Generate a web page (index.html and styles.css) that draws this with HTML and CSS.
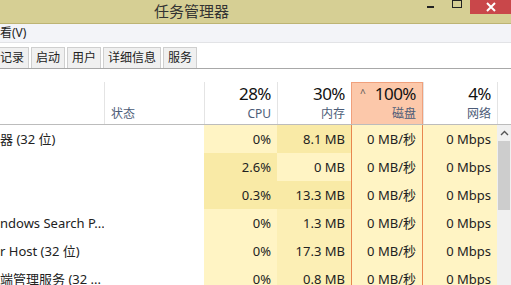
FILE: index.html
```html
<!DOCTYPE html>
<html lang="zh-CN">
<head>
  <meta charset="UTF-8">
  <meta name="viewport" content="width=device-width, initial-scale=1.0">
  <title>任务管理器</title>
  <link rel="stylesheet" href="styles.css">
</head>
<body>
  <div id="window">
    <div class="titlebar">
      <span class="title">任务管理器</span>
      <div class="controls">
        <span class="btn-min"></span>
        <span class="btn-max"></span>
        <span class="btn-close">
          <svg width="12" height="12" viewBox="0 0 12 12"><path d="M2 2 L10 10 M10 2 L2 10" stroke="#fff" stroke-width="2"/></svg>
        </span>
      </div>
    </div>

    <div class="menubar">看(V)</div>

    <div class="tabs">
      <span class="tab first">记录</span>
      <span class="tab">启动</span>
      <span class="tab">用户</span>
      <span class="tab">详细信息</span>
      <span class="tab">服务</span>
    </div>

    <div class="header">
      <div class="hcell name"></div>
      <div class="hcell status"><span class="label">状态</span></div>
      <div class="hcell num"><span class="pct">28%</span><span class="label">CPU</span></div>
      <div class="hcell num"><span class="pct">30%</span><span class="label">内存</span></div>
      <div class="hcell num disk">
        <span class="arrow">^</span>
        <span class="pct">100%</span><span class="label">磁盘</span>
      </div>
      <div class="hcell num"><span class="pct">4%</span><span class="label">网络</span></div>
      <div class="hcell scroll-head"></div>
    </div>

    <div class="list">
      <div class="rows">
        <div class="row">
          <div class="cell name">器 (32 位)</div>
          <div class="cell status"></div>
          <div class="cell num">0%</div>
          <div class="cell num dark">8.1 MB</div>
          <div class="cell num disk">0 MB/秒</div>
          <div class="cell num">0 Mbps</div>
        </div>
        <div class="row">
          <div class="cell name"></div>
          <div class="cell status"></div>
          <div class="cell num dark">2.6%</div>
          <div class="cell num">0 MB</div>
          <div class="cell num disk">0 MB/秒</div>
          <div class="cell num">0 Mbps</div>
        </div>
        <div class="row">
          <div class="cell name"></div>
          <div class="cell status"></div>
          <div class="cell num dark">0.3%</div>
          <div class="cell num dark">13.3 MB</div>
          <div class="cell num disk">0 MB/秒</div>
          <div class="cell num">0 Mbps</div>
        </div>
        <div class="row">
          <div class="cell name">ndows Search P...</div>
          <div class="cell status"></div>
          <div class="cell num">0%</div>
          <div class="cell num mid">1.3 MB</div>
          <div class="cell num disk">0 MB/秒</div>
          <div class="cell num">0 Mbps</div>
        </div>
        <div class="row">
          <div class="cell name">r Host (32 位)</div>
          <div class="cell status"></div>
          <div class="cell num">0%</div>
          <div class="cell num mid">17.3 MB</div>
          <div class="cell num disk">0 MB/秒</div>
          <div class="cell num">0 Mbps</div>
        </div>
        <div class="row">
          <div class="cell name">端管理服务 (32 ...</div>
          <div class="cell status"></div>
          <div class="cell num">0%</div>
          <div class="cell num mid">0.8 MB</div>
          <div class="cell num disk">0 MB/秒</div>
          <div class="cell num">0 Mbps</div>
        </div>
      </div>
      <div class="scrollbar">
        <div class="scroll-up">
          <svg width="9" height="6" viewBox="0 0 9 6"><path d="M1 5 L4.5 1.5 L8 5" fill="none" stroke="#555" stroke-width="1.4"/></svg>
        </div>
        <div class="thumb"></div>
      </div>
    </div>
  </div>
</body>
</html>
```

FILE: styles.css
```css
body{
  margin: 0;
  overflow: hidden;
  background: #fff;
  font-family: "Noto Sans", "Noto Sans CJK SC", sans-serif;
  color: #222;
}
#window{
  width: 511px;
  height: 285px;
  overflow: hidden;
}

/* title bar */
.titlebar{
  height: 23px;
  background: #d6cf94;
  border-bottom: 1px solid #bdb474;
  display: flex;
  align-items: flex-start;
}
.title{
  margin-left: 154px;
  margin-top: 1px;
  font-size: 15px;
  line-height: 20px;
  color: #333;
  font-family: "Noto Sans CJK SC", sans-serif;
}
.controls{
  margin-left: auto;
  display: flex;
  align-items: flex-start;
}
.btn-min{
  width: 7px;
  height: 2px;
  background: #222;
  margin-top: 6px;
}
.btn-max{
  width: 8px;
  height: 6px;
  border: 1px solid #222;
  border-top-width: 2px;
  margin-left: 18px;
  margin-top: -1px;
}
.btn-close{
  width: 41px;
  height: 14px;
  background: #c9474a;
  margin-left: 8px;
  display: flex;
  justify-content: center;
  align-items: center;
}

/* menu */
.menubar{
  height: 18px;
  background: #f3f4f8;
  border-bottom: 1px solid #e2e3e6;
  font-size: 12px;
  line-height: 18px;
  padding-left: 0;
}

/* tabs */
.tabs{
  height: 24px;
  border-bottom: 1px solid #a8a8a8;
  display: flex;
  align-items: flex-end;
  margin-top: 1px;
}
.tab{
  height: 20px;
  line-height: 20px;
  padding: 0 4px;
  margin-right: 2px;
  background: #f0f0f0;
  border: 1px solid #cfcfcf;
  border-bottom: none;
  font-size: 12px;
}
.tab.first{
  border-left: none;
  padding-left: 0;
}

/* header */
.header{
  display: flex;
  height: 55px;
  border-bottom: 1px solid #bcbcbc;
}
.hcell{
  display: flex;
  flex-direction: column;
  justify-content: flex-end;
  align-items: flex-end;
  padding-right: 6px;
  box-sizing: border-box;
  border-left: 1px solid #e4e4e4;
  margin-top: 13px;
}
.hcell.name{
  width: 104px;
  border-left: none;
}
.hcell.status{
  width: 100px;
  align-items: flex-start;
  padding-left: 6px;
}
.name{ width: 104px; }
.status{ width: 100px; }
.num{ width: 73px; }
.hcell.num{ width: 73px; }
.hcell.num.disk{
  width: 72px;
  border: 1px solid #f0a07c;
  border-bottom: none;
  background: #fcc8aa;
  position: relative;
}
.hcell.scroll-head{
  width: 14px;
  padding: 0;
}
.pct{
  font-size: 17px;
  line-height: 20px;
  letter-spacing: -0.5px;
  color: #111;
  margin-bottom: 1px;
}
.label{
  font-size: 12px;
  line-height: 18px;
  color: #4c5c78;
  margin-bottom: 1px;
}
.arrow{
  position: absolute;
  left: 8px;
  top: 3px;
  font-size: 10px;
  color: #555;
}

/* list */
.list{
  display: flex;
}
.rows{
  width: 497px;
}
.row{
  display: flex;
  height: 28px;
}
.cell{
  font-size: 13px;
  line-height: 28px;
  white-space: nowrap;
  overflow: hidden;
  box-sizing: border-box;
}
.cell.name{
  padding-left: 0;
}
.cell.num{
  text-align: right;
  padding-right: 6px;
  background: #fff4c4;
}
.cell.num.dark{
  background: #f9eaa6;
}
.cell.num.mid{
  background: #fcefb5;
}
.cell.num.disk{
  width: 72px;
  border-left: 1px solid #e8864f;
  border-right: 1px solid #e8864f;
}
.row .cell.num:nth-child(4){ width: 74px; }
.row .cell.num:nth-child(6){ width: 74px; }
.hcell.num:nth-child(4){ width: 74px; }
.hcell.num:nth-child(6){ width: 74px; }

.scrollbar{
  width: 14px;
  background: #f0f0f0;
  height: 160px;
}
.scroll-up{
  height: 16px;
  display: flex;
  justify-content: center;
  align-items: center;
}
.thumb{
  height: 69px;
  margin: 0 1px;
  background: #cdcdcd;
}
```
